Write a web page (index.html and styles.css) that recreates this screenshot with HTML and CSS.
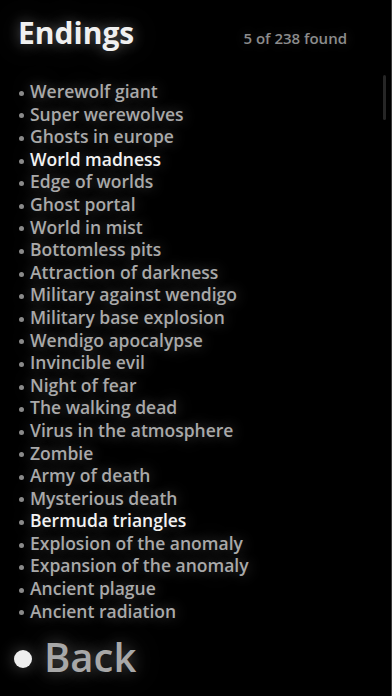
FILE: index.html
```html
<!DOCTYPE html>
<html>
<head>
    <meta charset="UTF-8">
    <meta name="viewport" content="width=device-width, initial-scale=1.0">
    <title>Endings</title>
    <link rel="stylesheet" href="styles.css">
</head>
<body>
    <div class="screen">
        <div class="header">
            <h1 class="title">Endings</h1>
            <span class="count">5 of 238 found</span>
        </div>
        <ul class="endings">
            <li>Werewolf giant</li>
            <li>Super werewolves</li>
            <li>Ghosts in europe</li>
            <li class="found">World madness</li>
            <li>Edge of worlds</li>
            <li>Ghost portal</li>
            <li>World in mist</li>
            <li>Bottomless pits</li>
            <li>Attraction of darkness</li>
            <li>Military against wendigo</li>
            <li>Military base explosion</li>
            <li>Wendigo apocalypse</li>
            <li>Invincible evil</li>
            <li>Night of fear</li>
            <li>The walking dead</li>
            <li>Virus in the atmosphere</li>
            <li>Zombie</li>
            <li>Army of death</li>
            <li>Mysterious death</li>
            <li class="found">Bermuda triangles</li>
            <li>Explosion of the anomaly</li>
            <li>Expansion of the anomaly</li>
            <li>Ancient plague</li>
            <li>Ancient radiation</li>
        </ul>
        <div class="back"><span class="dot"></span>Back</div>
        <div class="scrollbar"></div>
    </div>
</body>
</html>
```

FILE: styles.css
```css
body {
    margin: 0;
    background-color: #000;
    font-family: "Open Sans", "DejaVu Sans", sans-serif;
    font-weight: 700;
}
.screen {
    position: relative;
    height: 100vh;
    box-sizing: border-box;
    border-right: 1px solid #3c3c3c;
    padding: 15px 0 0 18px;
    overflow: hidden;
}
.header {
    display: flex;
    align-items: baseline;
    justify-content: space-between;
    padding-right: 44px;
}
.title {
    margin: 0;
    font-size: 30px;
    line-height: 36px;
    color: #f0f0f0;
    text-shadow: 0 0 14px rgba(255, 255, 255, 0.35), 0 0 34px rgba(255, 255, 255, 0.18);
}
.count {
    font-size: 15px;
    font-weight: 600;
    color: #8c8c8c;
    text-shadow: 0 0 12px rgba(255, 255, 255, 0.15);
}
.endings {
    list-style: none;
    margin: 29px 0 0 0;
    padding: 0;
}
.endings li {
    display: flex;
    align-items: center;
    font-size: 17.5px;
    font-weight: 600;
    line-height: 22.6px;
    color: #a9a9a9;
    text-shadow: 0 0 14px rgba(255, 255, 255, 0.3), 0 0 34px rgba(255, 255, 255, 0.18);
}
.endings li::before {
    content: "";
    width: 5px;
    height: 5px;
    margin: 4px 6px 0 1px;
    border-radius: 50%;
    background-color: #8a8a8a;
}
.endings li.found {
    color: #f2f2f2;
}
.back {
    display: flex;
    align-items: center;
    margin: 10px 0 0 -4px;
    font-size: 40px;
    font-weight: 600;
    line-height: 50px;
    color: #a8a8a8;
    text-shadow: 0 0 16px rgba(255, 255, 255, 0.3), 0 0 36px rgba(255, 255, 255, 0.18);
}
.back .dot {
    width: 18px;
    height: 18px;
    margin: 3px 12px 0 0;
    border-radius: 50%;
    background-color: #efefef;
    box-shadow: 0 0 16px rgba(255, 255, 255, 0.3);
}
.scrollbar {
    position: absolute;
    top: 75px;
    right: 5px;
    width: 3px;
    height: 45px;
    border-radius: 2px;
    background-color: #262626;
}
```
